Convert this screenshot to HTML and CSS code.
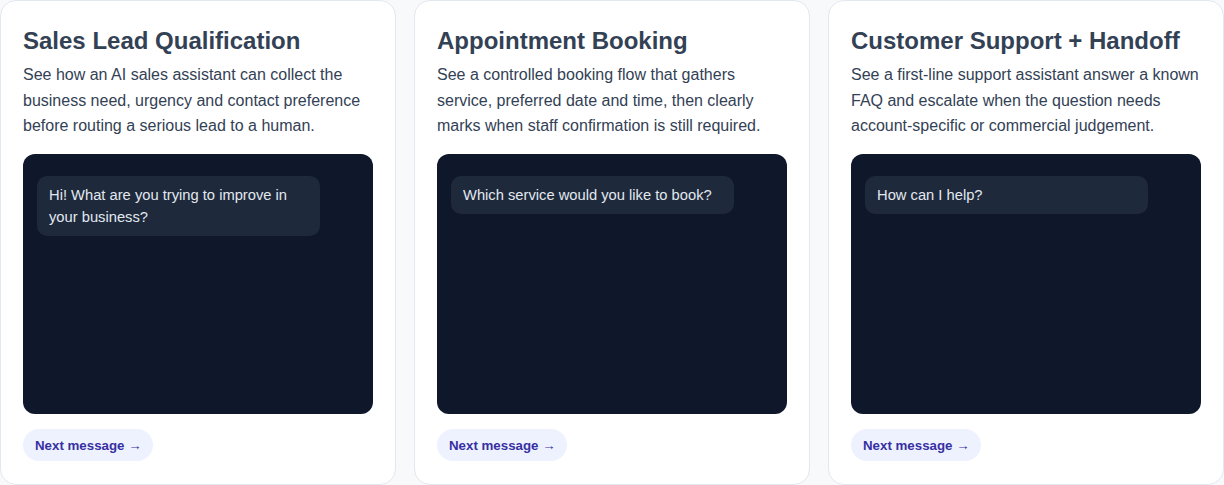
FILE: index.html
```html
<!DOCTYPE html>
<html lang="en">
<head>
<meta charset="utf-8">
<title>Demos</title>
<link rel="stylesheet" href="styles.css">
</head>
<body>
<main class="grid">
  <section class="card">
    <h2 class="card-title">Sales Lead Qualification</h2>
    <p class="card-desc">See how an AI sales assistant can collect the business need, urgency and contact preference before routing a serious lead to a human.</p>
    <div class="chat">
      <div class="bubble">Hi! What are you trying to improve in your business?</div>
    </div>
    <button class="next-btn" type="button">Next message →</button>
  </section>
  <section class="card">
    <h2 class="card-title">Appointment Booking</h2>
    <p class="card-desc">See a controlled booking flow that gathers service, preferred date and time, then clearly marks when staff confirmation is still required.</p>
    <div class="chat">
      <div class="bubble">Which service would you like to book?</div>
    </div>
    <button class="next-btn" type="button">Next message →</button>
  </section>
  <section class="card">
    <h2 class="card-title">Customer Support + Handoff</h2>
    <p class="card-desc">See a first-line support assistant answer a known FAQ and escalate when the question needs account-specific or commercial judgement.</p>
    <div class="chat">
      <div class="bubble">How can I help?</div>
    </div>
    <button class="next-btn" type="button">Next message →</button>
  </section>
</main>
</body>
</html>
```
FILE: styles.css
```css
* { box-sizing: border-box; }
html, body {
  margin: 0;
  padding: 0;
  background: #f8f9fb;
  font-family: "Liberation Sans", Arial, sans-serif;
}
.grid {
  display: grid;
  grid-template-columns: repeat(3, 1fr);
  gap: 18px;
}
.card {
  background: #ffffff;
  border: 1px solid #e2e8f0;
  border-radius: 16px;
  padding: 22px 22px 23px;
  display: flex;
  flex-direction: column;
  align-items: flex-start;
}
.card-title {
  margin: 0;
  font-size: 24px;
  line-height: 36px;
  font-weight: 700;
  color: #334155;
}
.card-desc {
  margin: 3px 0 0;
  font-size: 16px;
  line-height: 1.6;
  color: #334155;
}
.chat {
  align-self: stretch;
  margin-top: 15px;
  height: 260px;
  background: #0f172a;
  border-radius: 12px;
  padding: 22px 14px;
}
.bubble {
  width: 88%;
  background: #1e293b;
  color: #e2e8f0;
  border-radius: 10px;
  padding: 9.5px 12px 7.5px;
  font-size: 14.72px;
  line-height: 21.5px;
}
.next-btn {
  margin-top: 15px;
  height: 32px;
  padding: 1px 12px 0;
  border: none;
  border-radius: 999px;
  background: #eef2ff;
  color: #3730a3;
  font-family: "Liberation Sans", Arial, sans-serif;
  font-size: 13.3px;
  font-weight: 700;
  cursor: pointer;
}
```
